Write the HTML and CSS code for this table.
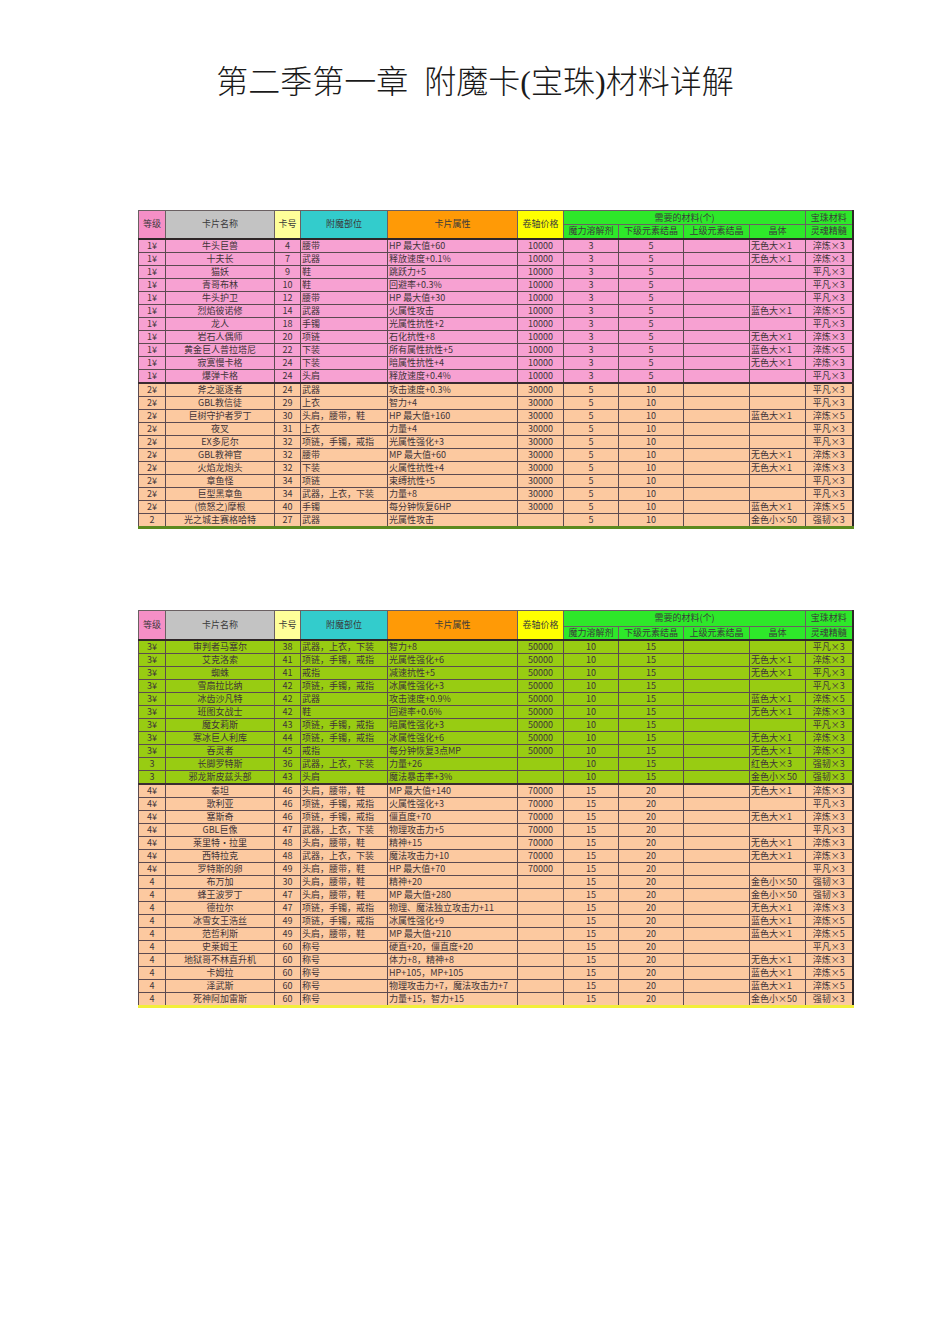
FILE: index.html
```html
<!DOCTYPE html>
<html lang="zh-CN">
<head>
<meta charset="utf-8">
<title>附魔卡(宝珠)材料详解</title>
<link rel="stylesheet" href="styles.css">
</head>
<body>
<div class="page">
<h1 class="title">第二季第一章&nbsp;&nbsp;附魔卡(宝珠)材料详解</h1>

<table class="sheet sheet-a">
<colgroup>
<col class="c-lv"><col class="c-name"><col class="c-no"><col class="c-part"><col class="c-attr"><col class="c-price"><col class="c-m1"><col class="c-m2"><col class="c-m3"><col class="c-m4"><col class="c-m5">
</colgroup>
<thead>
<tr class="h1">
<th rowspan="2" class="h-pink">等级</th><th rowspan="2" class="h-grey">卡片名称</th><th rowspan="2" class="h-lyellow">卡号</th><th rowspan="2" class="h-teal">附魔部位</th><th rowspan="2" class="h-orange">卡片属性</th><th rowspan="2" class="h-yellow">卷轴价格</th><th colspan="4" class="h-green h-need">需要的材料(个)</th><th class="h-green h-last">宝珠材料</th>
</tr>
<tr class="h2">
<th class="h-green">魔力溶解剂</th><th class="h-green">下级元素结晶</th><th class="h-green">上级元素结晶</th><th class="h-green">晶体</th><th class="h-green h-last">灵魂精髓</th>
</tr>
</thead>
<tbody>
<tr class="r1"><td>1¥</td><td>牛头巨兽</td><td>4</td><td>腰带</td><td>HP 最大值+60</td><td>10000</td><td>3</td><td>5</td><td></td><td>无色大×1</td><td>淬炼×3</td></tr>
<tr class="r1"><td>1¥</td><td>十夫长</td><td>7</td><td>武器</td><td>释放速度+0.1%</td><td>10000</td><td>3</td><td>5</td><td></td><td>无色大×1</td><td>淬炼×3</td></tr>
<tr class="r1"><td>1¥</td><td>猫妖</td><td>9</td><td>鞋</td><td>跳跃力+5</td><td>10000</td><td>3</td><td>5</td><td></td><td></td><td>平凡×3</td></tr>
<tr class="r1"><td>1¥</td><td>青哥布林</td><td>10</td><td>鞋</td><td>回避率+0.3%</td><td>10000</td><td>3</td><td>5</td><td></td><td></td><td>平凡×3</td></tr>
<tr class="r1"><td>1¥</td><td>牛头护卫</td><td>12</td><td>腰带</td><td>HP 最大值+30</td><td>10000</td><td>3</td><td>5</td><td></td><td></td><td>平凡×3</td></tr>
<tr class="r1"><td>1¥</td><td>烈焰彼诺修</td><td>14</td><td>武器</td><td>火属性攻击</td><td>10000</td><td>3</td><td>5</td><td></td><td>蓝色大×1</td><td>淬炼×5</td></tr>
<tr class="r1"><td>1¥</td><td>龙人</td><td>18</td><td>手镯</td><td>光属性抗性+2</td><td>10000</td><td>3</td><td>5</td><td></td><td></td><td>平凡×3</td></tr>
<tr class="r1"><td>1¥</td><td>岩石人偶师</td><td>20</td><td>项链</td><td>石化抗性+8</td><td>10000</td><td>3</td><td>5</td><td></td><td>无色大×1</td><td>淬炼×3</td></tr>
<tr class="r1"><td>1¥</td><td>黄金巨人普拉塔尼</td><td>22</td><td>下装</td><td>所有属性抗性+5</td><td>10000</td><td>3</td><td>5</td><td></td><td>蓝色大×1</td><td>淬炼×5</td></tr>
<tr class="r1"><td>1¥</td><td>寂寞慢卡格</td><td>24</td><td>下装</td><td>暗属性抗性+4</td><td>10000</td><td>3</td><td>5</td><td></td><td>无色大×1</td><td>淬炼×3</td></tr>
<tr class="r1 grp-end"><td>1¥</td><td>爆弹卡格</td><td>24</td><td>头肩</td><td>释放速度+0.4%</td><td>10000</td><td>3</td><td>5</td><td></td><td></td><td>平凡×3</td></tr>
<tr class="r2"><td>2¥</td><td>斧之驱逐者</td><td>24</td><td>武器</td><td>攻击速度+0.3%</td><td>30000</td><td>5</td><td>10</td><td></td><td></td><td>平凡×3</td></tr>
<tr class="r2"><td>2¥</td><td>GBL教信徒</td><td>29</td><td>上衣</td><td>智力+4</td><td>30000</td><td>5</td><td>10</td><td></td><td></td><td>平凡×3</td></tr>
<tr class="r2"><td>2¥</td><td>巨树守护者罗丁</td><td>30</td><td>头肩，腰带，鞋</td><td>HP 最大值+160</td><td>30000</td><td>5</td><td>10</td><td></td><td>蓝色大×1</td><td>淬炼×5</td></tr>
<tr class="r2"><td>2¥</td><td>夜叉</td><td>31</td><td>上衣</td><td>力量+4</td><td>30000</td><td>5</td><td>10</td><td></td><td></td><td>平凡×3</td></tr>
<tr class="r2"><td>2¥</td><td>EX多尼尔</td><td>32</td><td>项链，手镯，戒指</td><td>光属性强化+3</td><td>30000</td><td>5</td><td>10</td><td></td><td></td><td>平凡×3</td></tr>
<tr class="r2"><td>2¥</td><td>GBL教神官</td><td>32</td><td>腰带</td><td>MP 最大值+60</td><td>30000</td><td>5</td><td>10</td><td></td><td>无色大×1</td><td>淬炼×3</td></tr>
<tr class="r2"><td>2¥</td><td>火焰龙炮头</td><td>32</td><td>下装</td><td>火属性抗性+4</td><td>30000</td><td>5</td><td>10</td><td></td><td>无色大×1</td><td>淬炼×3</td></tr>
<tr class="r2"><td>2¥</td><td>章鱼怪</td><td>34</td><td>项链</td><td>束缚抗性+5</td><td>30000</td><td>5</td><td>10</td><td></td><td></td><td>平凡×3</td></tr>
<tr class="r2"><td>2¥</td><td>巨型黑章鱼</td><td>34</td><td>武器，上衣，下装</td><td>力量+8</td><td>30000</td><td>5</td><td>10</td><td></td><td></td><td>平凡×3</td></tr>
<tr class="r2"><td>2¥</td><td>(愤怒之)摩根</td><td>40</td><td>手镯</td><td>每分钟恢复6HP</td><td>30000</td><td>5</td><td>10</td><td></td><td>蓝色大×1</td><td>淬炼×5</td></tr>
<tr class="r2 last-a"><td>2</td><td>光之城主赛格哈特</td><td>27</td><td>武器</td><td>光属性攻击</td><td></td><td>5</td><td>10</td><td></td><td>金色小×50</td><td>强韧×3</td></tr>
</tbody>
</table>

<table class="sheet sheet-b">
<colgroup>
<col class="c-lv"><col class="c-name"><col class="c-no"><col class="c-part"><col class="c-attr"><col class="c-price"><col class="c-m1"><col class="c-m2"><col class="c-m3"><col class="c-m4"><col class="c-m5">
</colgroup>
<thead>
<tr class="h1">
<th rowspan="2" class="h-pink">等级</th><th rowspan="2" class="h-grey">卡片名称</th><th rowspan="2" class="h-lyellow">卡号</th><th rowspan="2" class="h-teal">附魔部位</th><th rowspan="2" class="h-orange">卡片属性</th><th rowspan="2" class="h-yellow">卷轴价格</th><th colspan="4" class="h-green h-need">需要的材料(个)</th><th class="h-green h-last">宝珠材料</th>
</tr>
<tr class="h2">
<th class="h-green">魔力溶解剂</th><th class="h-green">下级元素结晶</th><th class="h-green">上级元素结晶</th><th class="h-green">晶体</th><th class="h-green h-last">灵魂精髓</th>
</tr>
</thead>
<tbody>
<tr class="r3"><td>3¥</td><td>审判者马塞尔</td><td>38</td><td>武器，上衣，下装</td><td>智力+8</td><td>50000</td><td>10</td><td>15</td><td></td><td></td><td>平凡×3</td></tr>
<tr class="r3"><td>3¥</td><td>艾克洛索</td><td>41</td><td>项链，手镯，戒指</td><td>光属性强化+6</td><td>50000</td><td>10</td><td>15</td><td></td><td>无色大×1</td><td>淬炼×3</td></tr>
<tr class="r3"><td>3¥</td><td>蜘蛛</td><td>41</td><td>戒指</td><td>减速抗性+5</td><td>50000</td><td>10</td><td>15</td><td></td><td>无色大×1</td><td>平凡×3</td></tr>
<tr class="r3"><td>3¥</td><td>雪扇拉比纳</td><td>42</td><td>项链，手镯，戒指</td><td>冰属性强化+3</td><td>50000</td><td>10</td><td>15</td><td></td><td></td><td>平凡×3</td></tr>
<tr class="r3"><td>3¥</td><td>冰齿沙凡特</td><td>42</td><td>武器</td><td>攻击速度+0.9%</td><td>50000</td><td>10</td><td>15</td><td></td><td>蓝色大×1</td><td>淬炼×5</td></tr>
<tr class="r3"><td>3¥</td><td>班图女战士</td><td>42</td><td>鞋</td><td>回避率+0.6%</td><td>50000</td><td>10</td><td>15</td><td></td><td>无色大×1</td><td>淬炼×3</td></tr>
<tr class="r3"><td>3¥</td><td>魔女莉斯</td><td>43</td><td>项链，手镯，戒指</td><td>暗属性强化+3</td><td>50000</td><td>10</td><td>15</td><td></td><td></td><td>平凡×3</td></tr>
<tr class="r3"><td>3¥</td><td>寒冰巨人利库</td><td>44</td><td>项链，手镯，戒指</td><td>冰属性强化+6</td><td>50000</td><td>10</td><td>15</td><td></td><td>无色大×1</td><td>淬炼×3</td></tr>
<tr class="r3"><td>3¥</td><td>吞灵者</td><td>45</td><td>戒指</td><td>每分钟恢复3点MP</td><td>50000</td><td>10</td><td>15</td><td></td><td>无色大×1</td><td>淬炼×3</td></tr>
<tr class="r3"><td>3</td><td>长脚罗特斯</td><td>36</td><td>武器，上衣，下装</td><td>力量+26</td><td></td><td>10</td><td>15</td><td></td><td>红色大×3</td><td>强韧×3</td></tr>
<tr class="r3 grp-end"><td>3</td><td>邪龙斯皮兹头部</td><td>43</td><td>头肩</td><td>魔法暴击率+3%</td><td></td><td>10</td><td>15</td><td></td><td>金色小×50</td><td>强韧×3</td></tr>
<tr class="r4"><td>4¥</td><td>泰坦</td><td>46</td><td>头肩，腰带，鞋</td><td>MP 最大值+140</td><td>70000</td><td>15</td><td>20</td><td></td><td>无色大×1</td><td>淬炼×3</td></tr>
<tr class="r4"><td>4¥</td><td>歌利亚</td><td>46</td><td>项链，手镯，戒指</td><td>火属性强化+3</td><td>70000</td><td>15</td><td>20</td><td></td><td></td><td>平凡×3</td></tr>
<tr class="r4"><td>4¥</td><td>塞斯奇</td><td>46</td><td>项链，手镯，戒指</td><td>僵直度+70</td><td>70000</td><td>15</td><td>20</td><td></td><td>无色大×1</td><td>淬炼×3</td></tr>
<tr class="r4"><td>4¥</td><td>GBL巨像</td><td>47</td><td>武器，上衣，下装</td><td>物理攻击力+5</td><td>70000</td><td>15</td><td>20</td><td></td><td></td><td>平凡×3</td></tr>
<tr class="r4"><td>4¥</td><td>莱里特·拉里</td><td>48</td><td>头肩，腰带，鞋</td><td>精神+15</td><td>70000</td><td>15</td><td>20</td><td></td><td>无色大×1</td><td>淬炼×3</td></tr>
<tr class="r4"><td>4¥</td><td>西特拉克</td><td>48</td><td>武器，上衣，下装</td><td>魔法攻击力+10</td><td>70000</td><td>15</td><td>20</td><td></td><td>无色大×1</td><td>淬炼×3</td></tr>
<tr class="r4"><td>4¥</td><td>罗特斯的卵</td><td>49</td><td>头肩，腰带，鞋</td><td>HP 最大值+70</td><td>70000</td><td>15</td><td>20</td><td></td><td></td><td>平凡×3</td></tr>
<tr class="r4"><td>4</td><td>布万加</td><td>30</td><td>头肩，腰带，鞋</td><td>精神+20</td><td></td><td>15</td><td>20</td><td></td><td>金色小×50</td><td>强韧×3</td></tr>
<tr class="r4"><td>4</td><td>蜂王波罗丁</td><td>47</td><td>头肩，腰带，鞋</td><td>MP 最大值+280</td><td></td><td>15</td><td>20</td><td></td><td>金色小×50</td><td>强韧×3</td></tr>
<tr class="r4"><td>4</td><td>德拉尔</td><td>47</td><td>项链，手镯，戒指</td><td>物理、魔法独立攻击力+11</td><td></td><td>15</td><td>20</td><td></td><td>无色大×1</td><td>淬炼×3</td></tr>
<tr class="r4"><td>4</td><td>冰雪女王浩丝</td><td>49</td><td>项链，手镯，戒指</td><td>冰属性强化+9</td><td></td><td>15</td><td>20</td><td></td><td>蓝色大×1</td><td>淬炼×5</td></tr>
<tr class="r4"><td>4</td><td>范哲利斯</td><td>49</td><td>头肩，腰带，鞋</td><td>MP 最大值+210</td><td></td><td>15</td><td>20</td><td></td><td>蓝色大×1</td><td>淬炼×5</td></tr>
<tr class="r4"><td>4</td><td>史莱姆王</td><td>60</td><td>称号</td><td>硬直+20，僵直度+20</td><td></td><td>15</td><td>20</td><td></td><td></td><td>平凡×3</td></tr>
<tr class="r4"><td>4</td><td>地狱哥不林直升机</td><td>60</td><td>称号</td><td>体力+8，精神+8</td><td></td><td>15</td><td>20</td><td></td><td>无色大×1</td><td>淬炼×3</td></tr>
<tr class="r4"><td>4</td><td>卡姆拉</td><td>60</td><td>称号</td><td>HP+105，MP+105</td><td></td><td>15</td><td>20</td><td></td><td>蓝色大×1</td><td>淬炼×5</td></tr>
<tr class="r4"><td>4</td><td>泽武斯</td><td>60</td><td>称号</td><td>物理攻击力+7，魔法攻击力+7</td><td></td><td>15</td><td>20</td><td></td><td>蓝色大×1</td><td>淬炼×5</td></tr>
<tr class="r4 last-b"><td>4</td><td>死神阿加雷斯</td><td>60</td><td>称号</td><td>力量+15，智力+15</td><td></td><td>15</td><td>20</td><td></td><td>金色小×50</td><td>强韧×3</td></tr>
</tbody>
</table>
</div>
</body>
</html>
```

FILE: styles.css
```css
html, body {
  margin: 0;
  padding: 0;
  background: #ffffff;
}

.page {
  width: 950px;
  padding-top: 62px;
}

.title {
  margin: 0;
  text-align: center;
  font-family: "Liberation Serif", "Noto Sans CJK SC", serif;
  font-size: 32px;
  line-height: 40px;
  font-weight: 300;
  color: #1a1a1a;
}

.sheet {
  border-collapse: collapse;
  table-layout: fixed;
  width: 714px;
  margin-left: 138px;
  font-family: "Noto Sans CJK SC", "DejaVu Sans", sans-serif;
  font-size: 9px;
  line-height: 12px;
  color: #3f3438;
}

.sheet-a { margin-top: 108px; }
.sheet-b { margin-top: 81px; }

.c-lv { width: 27px; }
.c-name { width: 109px; }
.c-no { width: 26px; }
.c-part { width: 87px; }
.c-attr { width: 130px; }
.c-price { width: 46px; }
.c-m1 { width: 55px; }
.c-m2 { width: 65px; }
.c-m3 { width: 66px; }
.c-m4 { width: 56px; }
.c-m5 { width: 47px; }

.sheet th {
  font-weight: 400;
  padding: 0;
  text-align: center;
  white-space: nowrap;
  border: 1px solid #6a6062;
  color: #3a3a3a;
}

.sheet .h1 { height: 14px; }
.sheet .h2 { height: 14px; }
.sheet-b .h1 { height: 16px; }
.sheet .h2 th { border-bottom: 2px solid #2e2628; }
.sheet .h1 th[rowspan] { border-bottom: 2px solid #2e2628; }
.sheet th.h-last { border-right: 2px solid #2e2628; }

.h-pink { background: #f58fc6; }
.h-grey { background: #c3c3c3; }
.h-lyellow { background: #ffff99; }
.h-teal { background: #33cccc; }
.h-orange { background: #ff9a06; }
.h-yellow { background: #ffff00; }
.h-green { background: #2ee82a; }

.sheet td {
  padding: 0 1px;
  white-space: nowrap;
  border: 1px solid #5c4a50;
  overflow: visible;
}

.sheet tbody tr { height: 13px; }

.sheet td:nth-child(1),
.sheet td:nth-child(2),
.sheet td:nth-child(3),
.sheet td:nth-child(6),
.sheet td:nth-child(7),
.sheet td:nth-child(8),
.sheet td:nth-child(11) {
  text-align: center;
}

.sheet td:nth-child(4),
.sheet td:nth-child(5),
.sheet td:nth-child(10) {
  text-align: left;
}

.sheet td:nth-child(11) {
  border-right: 2px solid #2e2628;
}

.r1 { background: #f7a1d2; }
.r2 { background: #fcc9a0; }
.r3 { background: #98cc12; }
.r4 { background: #fcc9a0; }

.grp-end td { border-bottom: 2px solid #3a2c30; }

.last-a td { border-bottom: 3px solid #5c8a1e; }
.last-b td { border-bottom: 3px solid #f2ee3a; }
```
